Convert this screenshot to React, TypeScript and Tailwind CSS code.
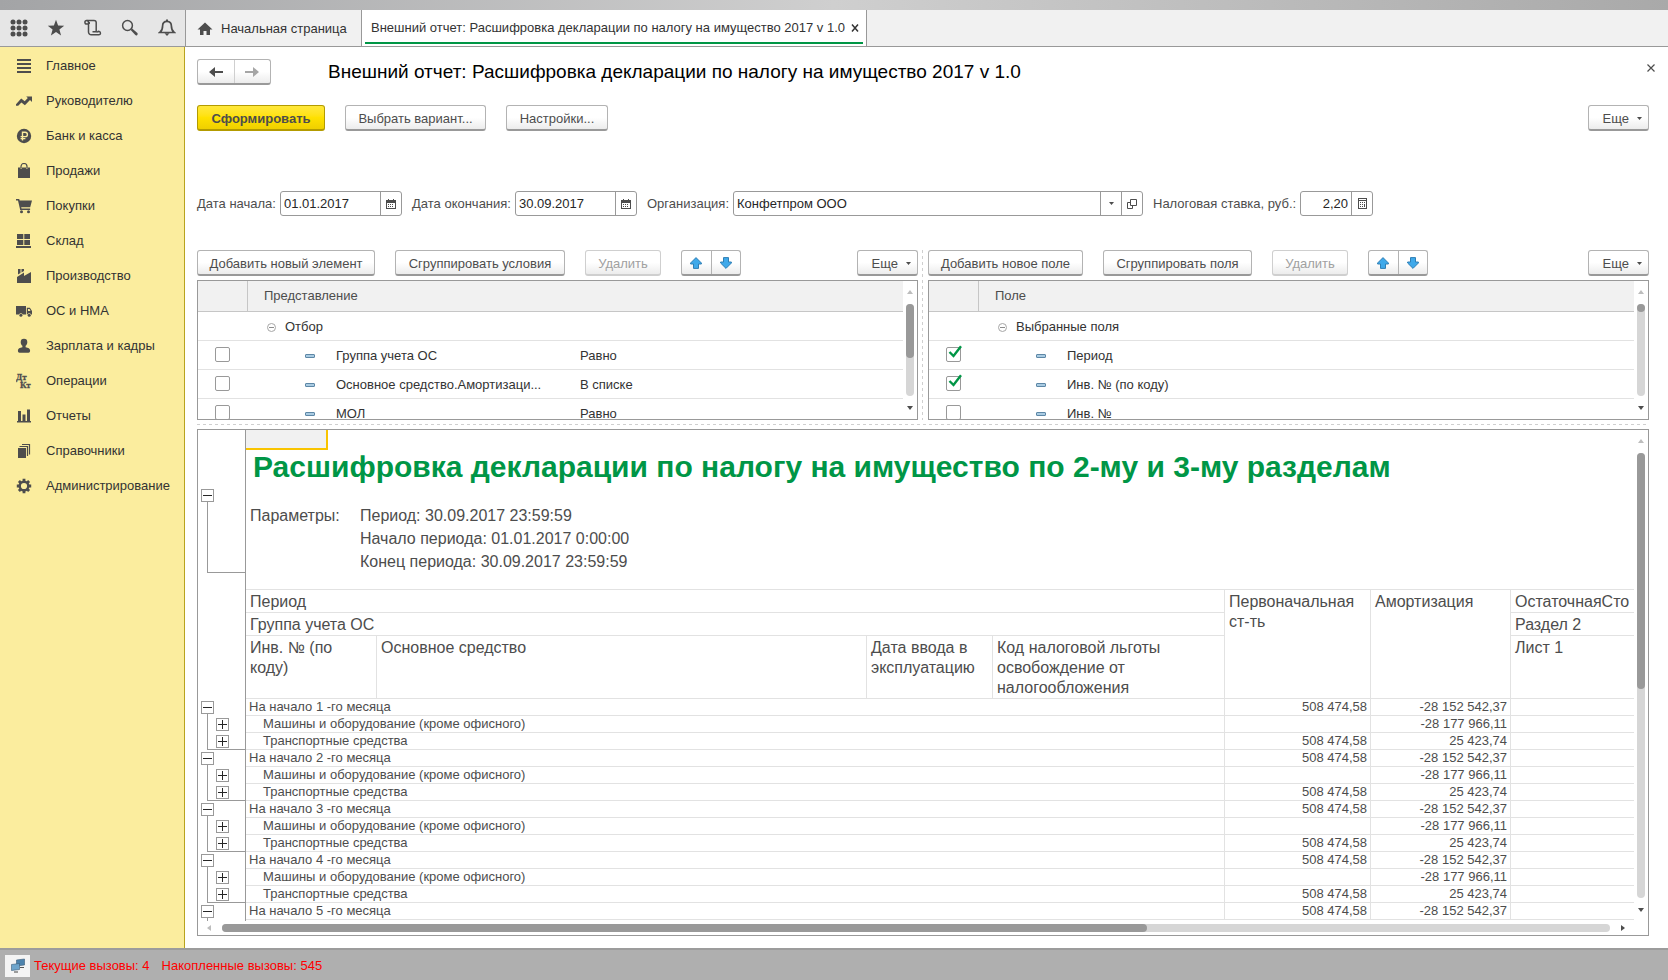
import React from 'react';

type IconProps = { children: React.ReactNode; className?: string; box?: string };

const Icon: React.FC<IconProps> = ({ children, className = 'size-4', box = '0 0 16 16' }) => (
    <svg viewBox={box} className={`shrink-0 ${className}`} fill="currentColor" aria-hidden="true">
        {children}
    </svg>
);

const toolbar = [
    {
        label: 'Функции',
        icon: (
            <>
                {[3, 9, 15].map((y) => [3, 9, 15].map((x) => <circle key={`${x}-${y}`} cx={x} cy={y} r="2.5" />))}
            </>
        ),
    },
    { label: 'Избранное', icon: <path d="M9 .8l2.1 5.8 6.1.2-4.8 3.8 1.7 6L9 13.1l-5.1 3.5 1.7-6L.8 6.8l6.1-.2z" /> },
    {
        label: 'История',
        icon: (
            <g fill="none" stroke="currentColor" strokeWidth="1.5">
                <path d="M5.200 5H2.700a1.800 1.800 0 1 1 1.800-1.800V13a2.800 2.800 0 0 0 2.800 2.800h7.500a1.700 1.700 0 1 0-1.600-2.300" />
                <path d="M2.700 1.400h7.300a2.200 2.200 0 0 1 2.200 2.200v9.200H8.500M5.200 5V3" />
            </g>
        ),
    },
    {
        label: 'Поиск',
        icon: (
            <>
                <circle cx="6.500" cy="6.500" r="4.900" fill="none" stroke="currentColor" strokeWidth="1.500" />
                <path d="M9.600 11l1.500-1.500 5.300 4.500a1.500 1.500 0 0 1-2.100 2.100z" />
            </>
        ),
    },
    {
        label: 'Оповещения',
        icon: (
            <>
                <path
                    d="M9 2.300c-3 0-4.400 2-4.400 4.700 0 3.500-.7 5-2.800 6.500h14.400c-2.100-1.500-2.800-3-2.800-6.500C13.400 4.300 12 2.300 9 2.300z"
                    fill="none"
                    stroke="currentColor"
                    strokeWidth="1.700"
                />
                <path d="M8 .4h2v2H8zM6.500 14.200h5L9 17z" />
            </>
        ),
    },
];

const sections = [
    { label: 'Главное', icon: <path d="M1 1h14v2H1zM1 5h14v2H1zM1 9h14v2H1zM1 13h14v2H1z" /> },
    {
        label: 'Руководителю',
        icon: <path d="M0 11.200L5.200 5.500l3.500 2.700 3.100-3.200L10.200 3.500H16v5.600l-2-2-5.100 5.200-3.500-2.700-3.200 3.100H0z" />,
    },
    {
        label: 'Банк и касса',
        icon: (
            <>
                <circle cx="8" cy="8" r="7.200" />
                <path
                    d="M6.500 12.500V4.200h2.700a2.200 2.200 0 0 1 0 4.400H4.600M4.600 10.600h4.800"
                    fill="none"
                    stroke="#fbed9e"
                    strokeWidth="1.400"
                />
            </>
        ),
    },
    {
        label: 'Продажи',
        icon: (
            <>
                <path d="M2 4.500h2.500V6h1.200V4.500h4.600V6h1.200V4.500H14V15H2z" />
                <path d="M5 5.500v-2a3 3 0 0 1 6 0v2" fill="none" stroke="currentColor" strokeWidth="1.200" />
            </>
        ),
    },
    {
        label: 'Покупки',
        icon: (
            <>
                <path d="M0 1h3.200l.5 1.500H16l-1.800 6.700H5.200l.3 1.300h8.600V12H4.200L2 2.500H0z" />
                <circle cx="5.500" cy="13.700" r="1.500" />
                <circle cx="12.500" cy="13.700" r="1.500" />
            </>
        ),
    },
    { label: 'Склад', icon: <path d="M1 1h6.300v5H1zM8.300 1H14v5H8.300zM1 7h6.300v5H1zM8.300 7H14v5H8.300zM0 13h15v2H0z" /> },
    {
        label: 'Производство',
        icon: <path d="M2 1h2.500v4L2 6.500zM5.500 1H8v2L5.500 4.500zM1 15V9l7-4.500V8l7-4v11z" />,
    },
    {
        label: 'ОС и НМА',
        icon: (
            <>
                <path d="M0 3h10v8.500H6.700a2 2 0 0 0-3.600 0H0zM10.800 4.800h3.100L16 8v3.500h-1a2 2 0 0 0-3.600 0h-.6z" />
                <circle cx="4.900" cy="12.200" r="1.500" />
                <circle cx="13.200" cy="12.200" r="1.500" />
                <path d="M12 6h1.500l1 2H12z" fill="#fbed9e" />
            </>
        ),
    },
    {
        label: 'Зарплата и кадры',
        icon: <path d="M8 .8a3.300 3.300 0 0 1 3.300 3.400c0 1.600-.7 2.800-1.700 3.500v1.500c2.600.4 4.500 1.200 4.500 3.300 0 1.300-.7 2.300-1.600 2.300h-9c-.9 0-1.600-1-1.600-2.300 0-2.100 1.900-2.900 4.500-3.300V7.700c-1-.7-1.700-1.900-1.700-3.500A3.300 3.300 0 0 1 8 .8z" />,
    },
    {
        label: 'Операции',
        icon: (
            <g fontFamily="Liberation Serif, serif" fontWeight="700" fontSize="9" stroke="currentColor" strokeWidth=".3">
                <text x="0" y="7">Дт</text>
                <text x="4" y="15">Кт</text>
            </g>
        ),
    },
    { label: 'Отчеты', icon: <path d="M2 3h3v10h1.500V6.500h3V13H11V1.500h3V13h1v1.600H1V13h1z" /> },
    {
        label: 'Справочники',
        icon: (
            <>
                <path d="M2 5h8v10H2z" />
                <path d="M3.500 3.500h8V13M6 1.500h7.500V11.500" fill="none" stroke="currentColor" strokeWidth="1.200" />
            </>
        ),
    },
    {
        label: 'Администрирование',
        icon: (
            <>
                <circle cx="8" cy="8" r="4.300" fill="none" stroke="currentColor" strokeWidth="2.400" />
                <path
                    d="M8 .8v2.500M8 12.700v2.500M.8 8h2.500M12.700 8h2.500M2.900 2.900l1.800 1.800M11.300 11.300l1.800 1.800M2.900 13.100l1.800-1.800M11.300 4.700l1.800-1.800"
                    stroke="currentColor"
                    strokeWidth="2.800"
                />
            </>
        ),
    },
];

const filters = [
    { name: 'Группа учета ОС', compare: 'Равно', checked: false },
    { name: 'Основное средство.Амортизаци...', compare: 'В списке', checked: false },
    { name: 'МОЛ', compare: 'Равно', checked: false },
];

const fields = [
    { name: 'Период', checked: true },
    { name: 'Инв. № (по коду)', checked: true },
    { name: 'Инв. №', checked: false },
];

const months = [1, 2, 3, 4];

const buttonBase =
    'h-[26px] rounded-[3px] border border-b-2 border-[#b3b3b3] border-b-[#999] bg-linear-to-b from-white from-50% to-[#ececec]';

type ButtonProps = { children: React.ReactNode; className?: string; disabled?: boolean };

const Button: React.FC<ButtonProps> = ({ children, className = '', disabled }) => (
    <button
        disabled={disabled}
        className={`${buttonBase} shrink-0 pt-[2px] text-center whitespace-nowrap disabled:border-[#cfcfcf] disabled:text-[#a0a0a0] ${className}`}
    >
        {children}
    </button>
);

const Caret = () => (
    <Icon box="0 0 5 3" className="h-[3px] w-[5px]">
        <path d="M0 0h5L2.500 3z" />
    </Icon>
);

const MoreButton: React.FC<{ className?: string }> = ({ className = '' }) => (
    <button className={`${buttonBase} flex w-[61px] shrink-0 items-center justify-end gap-2 pt-[2px] pr-[6px] ${className}`}>
        Еще
        <Caret />
    </button>
);

const MoveButtons = () => (
    <div className={`${buttonBase} flex w-[60px] shrink-0`}>
        <button aria-label="Вверх" className="flex flex-1 items-center justify-center border-r border-[#b3b3b3] text-[#3fa9ea]">
            <Icon box="0 0 12 12" className="size-3">
                <path d="M6 .6L11.400 6v1H8.500v4.400h-5V7H.6V6z" stroke="#2f7fb5" />
            </Icon>
        </button>
        <button aria-label="Вниз" className="flex flex-1 items-center justify-center text-[#3fa9ea]">
            <Icon box="0 0 12 12" className="size-3">
                <path d="M6 11.400L.6 6V5h2.900V.6h5V5h2.900v1z" stroke="#2f7fb5" />
            </Icon>
        </button>
    </div>
);

const ScrollY: React.FC<{ thumb: string }> = ({ thumb }) => (
    <div className="flex w-[14px] shrink-0 flex-col items-center gap-[9px] py-[9px]">
        <Icon box="0 0 6 5" className="h-[5px] w-[6px] text-[#bdbdbd]">
            <path d="M3 0l3 4H0z" />
        </Icon>
        <div className="w-2 flex-1 rounded-full bg-[#d6d6d6]">
            <div className={`rounded-full bg-[#999] ${thumb}`} />
        </div>
        <Icon box="0 0 6 5" className="h-[5px] w-[6px] text-[#4d4d4d]">
            <path d="M0 1h6L3 5z" />
        </Icon>
    </div>
);

const ScrollX = () => (
    <div className="mr-[14px] flex h-[14px] shrink-0 items-center gap-[10px] px-[9px]">
        <Icon box="0 0 5 6" className="h-[6px] w-[5px] text-[#bdbdbd]">
            <path d="M4 0v6L0 3z" />
        </Icon>
        <div className="h-2 flex-1 rounded-full bg-[#d6d6d6]">
            <div className="h-2 w-2/3 rounded-full bg-[#999]" />
        </div>
        <Icon box="0 0 5 6" className="h-[6px] w-[5px] text-[#4d4d4d]">
            <path d="M1 0v6l4-3z" />
        </Icon>
    </div>
);

const CalendarIcon = () => (
    <Icon box="0 0 10 10" className="size-[10px]">
        <path d="M0 1h2V0h1v1h4V0h1v1h2v9H0zM1 4v5h8V4z" fillRule="evenodd" />
        <path d="M2 5h1v1H2zM4 5h1v1H4zM6 5h1v1H6zM2 7h1v1H2zM4 7h1v1H4zM6 7h1v1H6z" />
    </Icon>
);

type FieldProps = {
    id: string;
    label: string;
    value: string;
    className: string;
    inputClass?: string;
    children: React.ReactNode;
};

const Field: React.FC<FieldProps> = ({ id, label, value, className, inputClass = '', children }) => (
    <div className={`flex items-center gap-1 ${className}`}>
        <label htmlFor={id} className="shrink-0 whitespace-nowrap">
            {label}
        </label>
        <div className="flex h-[25px] min-w-0 flex-1 rounded-[3px] border border-[#999]">
            <input
                id={id}
                defaultValue={value}
                className={`min-w-0 flex-1 bg-transparent px-[3px] text-[#262626] outline-none ${inputClass}`}
            />
            {children}
        </div>
    </div>
);

const FieldButton: React.FC<{ label: string; children: React.ReactNode }> = ({ label, children }) => (
    <button aria-label={label} className="flex w-[21px] items-center justify-center border-l border-[#999]">
        {children}
    </button>
);

type Row = { name: string; compare?: string; checked: boolean };

const SettingsList: React.FC<{ title: string; root: string; rows: Row[]; thumb: string }> = ({ title, root, rows, thumb }) => (
    <div className="mt-1 flex h-[140px] overflow-hidden border border-[#999]">
        <div className="min-w-0 flex-1 overflow-hidden">
            <table className="w-full table-fixed border-separate border-spacing-0 text-left text-[#333]">
                <colgroup>
                    <col className="w-[50px]" />
                    <col className="w-[312px]" />
                    <col />
                </colgroup>
                <thead>
                    <tr className="h-[31px] bg-[#f1f1f1] text-[#4d4d4d]">
                        <th className="border-r border-b border-[#c6c6c6] p-0" aria-label="Пометка" />
                        <th className="border-b border-[#c6c6c6] p-0 pl-4 font-normal">{title}</th>
                        <th className="border-b border-[#c6c6c6] p-0" aria-label="Вид сравнения" />
                    </tr>
                </thead>
                <tbody>
                    <tr className="h-[29px]">
                        <td className="border-b border-[#e2e2e2] p-0" />
                        <td colSpan={2} className="border-b border-[#e2e2e2] p-0 pt-[2px] pl-[19px]">
                            <div className="flex items-center gap-[9px]">
                                <Icon box="0 0 9 9" className="size-[9px] text-[#8c8c8c]">
                                    <circle cx="4.500" cy="4.500" r="4" fill="none" stroke="#a6a6a6" />
                                    <path d="M2 4h5v1H2z" />
                                </Icon>
                                {root}
                            </div>
                        </td>
                    </tr>
                    {rows.map((row) => (
                        <tr key={row.name} className="h-[29px]">
                            <td className="border-b border-[#e2e2e2] p-0 pb-[1px] pl-[17px]">
                                <div className="relative size-[15px]">
                                    <input
                                        type="checkbox"
                                        aria-label={row.name}
                                        defaultChecked={row.checked}
                                        className="peer block size-[15px] appearance-none rounded-[2px] border border-[#999] bg-white"
                                    />
                                    <svg
                                        viewBox="0 0 14 14"
                                        className="pointer-events-none absolute -top-[2px] left-[2px] hidden size-[14px] peer-checked:block"
                                    >
                                        <path d="M1.500 7l4 4L13 1.200" fill="none" stroke="#009646" strokeWidth="2.400" />
                                    </svg>
                                </div>
                            </td>
                            <td className="border-b border-[#e2e2e2] p-0 pt-[2px] pl-[57px]">
                                <div className="flex items-center gap-[21px] whitespace-nowrap">
                                    <span className="h-1 w-[10px] shrink-0 rounded-[1px] border border-[#5d87a6] bg-[#a9cbe2]" />
                                    {row.name}
                                </div>
                            </td>
                            <td className="border-b border-[#e2e2e2] p-0 pt-[2px] pl-5">{row.compare}</td>
                        </tr>
                    ))}
                </tbody>
            </table>
        </div>
        <ScrollY thumb={thumb} />
    </div>
);

const Toggle: React.FC<{ open?: boolean }> = ({ open }) => (
    <button
        aria-label={open ? 'Свернуть' : 'Развернуть'}
        className="size-[13px] shrink-0 border border-[#999] bg-white text-[#262626]"
    >
        <Icon box="0 0 11 11" className="block size-[11px]">
            <path d={open ? 'M1 5h9v1H1z' : 'M1 5h4V1h1v4h4v1H6v4H5V6H1z'} />
        </Icon>
    </button>
);

// Bracket joining a group row with its nested rows
const Bracket: React.FC<{ className: string; children?: React.ReactNode }> = ({ className, children }) => (
    <div className={`flex shrink-0 pt-[2px] pl-[3px] ${className}`}>
        <div className="flex w-[13px] flex-col">
            <Toggle open />
            <div className="w-[7px] flex-1 self-end border-b border-l border-[#999]" />
        </div>
        <div className="flex flex-1 flex-col gap-1 border-b border-[#999] pt-[17px] pl-[2px]">{children}</div>
    </div>
);

const headCell = 'border-b border-[#e2e2e2] px-1 pt-[2px] pb-0 align-top font-normal';
const sumCell = 'border-r border-b border-[#e2e2e2] p-0 pr-[3px] text-right';

type ReportRowProps = { title: string; cost?: string; wear: string; nested?: boolean };

const ReportRow: React.FC<ReportRowProps> = ({ title, cost, wear, nested }) => (
    <tr className="h-[17px]">
        <td colSpan={4} className={`border-r border-b border-[#e2e2e2] p-0 ${nested ? 'pl-[17px]' : 'pl-[3px]'}`}>
            {title}
        </td>
        <td className={sumCell}>{cost}</td>
        <td className={sumCell}>{wear}</td>
        <td className="border-b border-[#e2e2e2] p-0" />
    </tr>
);

const Report = () => (
    <section className="mb-3 flex min-h-0 flex-1 flex-col border border-[#999]">
        <div className="flex min-h-0 flex-1">
            <div className="flex w-12 shrink-0 flex-col overflow-hidden border-r border-[#999] pt-[57px]">
                <Bracket className="mb-[126px] h-[86px]" />
                {months.map((month) => (
                    <Bracket key={month} className="h-[51px]">
                        <Toggle />
                        <Toggle />
                    </Bracket>
                ))}
                <Bracket className="h-[51px]" />
            </div>
            <div className="min-w-0 flex-1 overflow-hidden text-[#4d4d4d]">
                <div className="h-5 w-[82px] border-r-2 border-b-2 border-[#f9c400] bg-[#f1f1f1]" />
                <h2 className="pl-[7px] text-[30px] leading-[34px] font-bold whitespace-nowrap text-[#009646]">
                    Расшифровка декларации по налогу на имущество по 2-му и 3-му разделам
                </h2>
                <div className="mt-5 flex pl-1 text-[16px] leading-[23px]">
                    <div className="w-[110px]">Параметры:</div>
                    <div>
                        <p>Период: 30.09.2017 23:59:59</p>
                        <p>Начало периода: 01.01.2017 0:00:00</p>
                        <p>Конец периода: 30.09.2017 23:59:59</p>
                    </div>
                </div>
                <table className="mt-4 w-full table-fixed border-separate border-spacing-0 border-t border-[#e2e2e2] text-left leading-4">
                    <colgroup>
                        <col className="w-[131px]" />
                        <col className="w-[490px]" />
                        <col className="w-[126px]" />
                        <col className="w-[232px]" />
                        <col className="w-[146px]" />
                        <col className="w-[140px]" />
                        <col />
                    </colgroup>
                    <thead className="text-[16px] leading-5">
                        <tr className="h-[23px]">
                            <th colSpan={4} className={`border-r ${headCell}`}>Период</th>
                            <th rowSpan={3} className={`border-r ${headCell}`}>Первоначальная ст-ть</th>
                            <th rowSpan={3} className={`border-r ${headCell}`}>Амортизация</th>
                            <th className={headCell}>ОстаточнаяСто</th>
                        </tr>
                        <tr className="h-[23px]">
                            <th colSpan={4} className={`border-r ${headCell}`}>Группа учета ОС</th>
                            <th className={headCell}>Раздел 2</th>
                        </tr>
                        <tr className="h-[63px]">
                            <th className={`border-r ${headCell}`}>Инв. № (по коду)</th>
                            <th className={`border-r ${headCell}`}>Основное средство</th>
                            <th className={`border-r ${headCell}`}>Дата ввода в эксплуатацию</th>
                            <th className={`border-r ${headCell}`}>Код налоговой льготы освобождение от налогообложения</th>
                            <th className={headCell}>Лист 1</th>
                        </tr>
                    </thead>
                    <tbody>
                        {months.map((month) => (
                            <React.Fragment key={month}>
                                <ReportRow title={`На начало ${month} -го месяца`} cost="508 474,58" wear="-28 152 542,37" />
                                <ReportRow nested title="Машины и оборудование (кроме офисного)" wear="-28 177 966,11" />
                                <ReportRow nested title="Транспортные средства" cost="508 474,58" wear="25 423,74" />
                            </React.Fragment>
                        ))}
                        <ReportRow title="На начало 5 -го месяца" cost="508 474,58" wear="-28 152 542,37" />
                    </tbody>
                </table>
            </div>
            <ScrollY thumb="h-[53%]" />
        </div>
        <ScrollX />
    </section>
);

const App: React.FC = () => {
    return (
        <div className="flex h-screen flex-col overflow-hidden bg-white font-['Liberation_Sans',Arial,sans-serif] text-[13px] leading-4 text-[#4d4d4d]">
            <div className="h-[10px] shrink-0 bg-linear-to-r from-[#a3a4a6] via-[#cfcfcf] to-[#a9a9a9]" />
            <header className="flex h-[37px] shrink-0 border-b border-[#999] bg-[#f1f1f1]">
                <div className="grid w-[186px] shrink-0 grid-cols-5 border-r border-[#999] bg-[#e6e6e6]">
                    {toolbar.map((item) => (
                        <button key={item.label} aria-label={item.label} className="flex items-center justify-center">
                            <Icon box="0 0 18 18" className="size-[18px]">
                                {item.icon}
                            </Icon>
                        </button>
                    ))}
                </div>
                <a href="#home" className="flex w-[176px] shrink-0 items-center gap-2 border-r border-[#999] pt-[1px] pl-[11px] text-[#333]">
                    <Icon className="size-4 text-[#4d4d4d]">
                        <path d="M8 1.500l7.500 7H13V14H9.500v-4h-3v4H3V8.500H.5z" />
                    </Icon>
                    Начальная страница
                </a>
                <div className="flex shrink-0 flex-col border-r border-[#999] bg-white px-[3px] text-[#333]">
                    <div className="flex flex-1 items-center gap-[6px] border-b-2 border-[#009646] pt-1 pr-1 pl-[6px]">
                        <a href="#report">Внешний отчет: Расшифровка декларации по налогу на имущество 2017 v 1.0</a>
                        <button aria-label="Закрыть вкладку">
                            <Icon box="0 0 8 8" className="size-2">
                                <path d="M1 .5l6 7M7 .5l-6 7" stroke="currentColor" strokeWidth="1.500" />
                            </Icon>
                        </button>
                    </div>
                    <div className="h-[2px]" />
                </div>
            </header>

            <div className="flex min-h-0 flex-1">
                <nav className="w-[185px] shrink-0 border-r border-[#b8a31f] bg-[#fbed9e] pt-[1px]">
                    {sections.map((item) => (
                        <a key={item.label} href="#section" className="flex h-[35px] items-center gap-[14px] pl-4 text-[#333]">
                            <Icon className="size-4 text-[#4d4d4d]">{item.icon}</Icon>
                            {item.label}
                        </a>
                    ))}
                </nav>

                <main className="flex min-w-0 flex-1 flex-col pt-3 pr-[19px] pl-3">
                    <div className="flex h-[26px] items-center">
                        <div className={`${buttonBase} flex w-[74px] shrink-0`}>
                            <button aria-label="Назад" className="flex flex-1 items-center justify-center border-r border-[#cfcfcf]">
                                <Icon box="0 0 14 12" className="h-3 w-[14px]">
                                    <path d="M0 6l6-5v4h8v2H6v4z" />
                                </Icon>
                            </button>
                            <button aria-label="Вперед" className="flex flex-1 items-center justify-center text-[#a6a6a6]">
                                <Icon box="0 0 14 12" className="h-3 w-[14px]">
                                    <path d="M14 6L8 1v4H0v2h8v4z" />
                                </Icon>
                            </button>
                        </div>
                        <h1 className="ml-[57px] text-[19px] leading-6 whitespace-nowrap text-black">
                            Внешний отчет: Расшифровка декларации по налогу на имущество 2017 v 1.0
                        </h1>
                        <button aria-label="Закрыть" className="-mr-[6px] ml-auto pb-2">
                            <Icon box="0 0 8 8" className="size-2">
                                <path d="M.5.5l7 7M7.500.5l-7 7" stroke="currentColor" strokeWidth="1.200" />
                            </Icon>
                        </button>
                    </div>

                    <div className="mt-5 flex gap-5">
                        <button className="h-[26px] w-32 rounded-[3px] border border-b-2 border-[#b39b00] bg-linear-to-b from-[#ffe83a] via-[#ffe100] to-[#efd000] pt-[2px] font-bold">
                            Сформировать
                        </button>
                        <Button className="w-[141px]">Выбрать вариант...</Button>
                        <Button className="w-[102px]">Настройки...</Button>
                        <MoreButton className="ml-auto" />
                    </div>

                    <div className="mt-[60px] flex gap-[10px]">
                        <Field id="from" label="Дата начала:" value="01.01.2017" className="w-[205px]">
                            <FieldButton label="Выбрать дату начала"><CalendarIcon /></FieldButton>
                        </Field>
                        <Field id="to" label="Дата окончания:" value="30.09.2017" className="w-[225px]">
                            <FieldButton label="Выбрать дату окончания"><CalendarIcon /></FieldButton>
                        </Field>
                        <Field id="org" label="Организация:" value="Конфетпром ООО" className="w-[496px]">
                            <FieldButton label="Выбрать из списка"><Caret /></FieldButton>
                            <FieldButton label="Открыть">
                                <Icon box="0 0 10 10" className="size-[10px]">
                                    <path d="M3.500.5h6v6h-6zM3.500 3.500h-3v6h5v-3" fill="none" stroke="currentColor" />
                                </Icon>
                            </FieldButton>
                        </Field>
                        <Field id="rate" label="Налоговая ставка, руб.:" value="2,20" className="w-[220px]" inputClass="text-right">
                            <FieldButton label="Калькулятор">
                                <Icon box="0 0 9 11" className="h-[11px] w-[9px]">
                                    <path d="M0 0h9v11H0zM1 1v1h7V1zM1 3v7h7V3z" fillRule="evenodd" />
                                    <path d="M2 4h1v1H2zM4 4h1v1H4zM6 4h1v1H6zM2 6h1v1H2zM4 6h1v1H4zM6 6h1v3H6zM2 8h1v1H2zM4 8h1v1H4z" />
                                </Icon>
                            </FieldButton>
                        </Field>
                    </div>

                    <div className="mt-[34px] flex">
                        <section className="min-w-0 flex-1">
                            <div className="flex gap-5">
                                <Button className="w-[178px]">Добавить новый элемент</Button>
                                <Button className="w-[170px]">Сгруппировать условия</Button>
                                <Button disabled className="w-[76px]">Удалить</Button>
                                <MoveButtons />
                                <MoreButton className="ml-auto" />
                            </div>
                            <SettingsList title="Представление" root="Отбор" rows={filters} thumb="h-[54px]" />
                        </section>
                        <div className="mr-[5px] ml-1 w-px bg-[repeating-linear-gradient(to_bottom,#cfcfcf_0_3px,transparent_3px_6px)]" />
                        <section className="min-w-0 flex-1">
                            <div className="flex gap-5">
                                <Button className="w-[155px]">Добавить новое поле</Button>
                                <Button className="w-[149px]">Сгруппировать поля</Button>
                                <Button disabled className="w-[76px]">Удалить</Button>
                                <MoveButtons />
                                <MoreButton className="ml-auto" />
                            </div>
                            <SettingsList title="Поле" root="Выбранные поля" rows={fields} thumb="h-2" />
                        </section>
                    </div>
                    <div className="my-1 h-px shrink-0 bg-[repeating-linear-gradient(to_right,#cfcfcf_0_3px,transparent_3px_6px)]" />

                    <Report />
                </main>
            </div>

            <footer className="flex h-8 shrink-0 items-center gap-1 border-t-2 border-[#9c9c9c] bg-[#afafaf] pt-[1px] pl-[5px] text-[#f00]">
                <button aria-label="Показатели" className="flex h-[22px] w-[25px] items-center justify-center bg-[#f4f4f4]">
                    <Icon box="0 0 16 16" className="size-4">
                        <path d="M6.500 2l8-1v6l-8 1z" fill="#4d83ad" stroke="#3b5d78" strokeWidth=".6" />
                        <path d="M10 9h4v1h-4z" fill="#555" />
                        <path d="M1.500 6.500l8-1v6l-8 1z" fill="#6ea5cc" stroke="#3b5d78" strokeWidth=".6" />
                        <path d="M4 13.500h4v1H4z" fill="#444" />
                    </Icon>
                </button>
                <span>Текущие вызовы: 4</span>
                <span className="ml-2">Накопленные вызовы: 545</span>
            </footer>
        </div>
    );
};

export default App;
